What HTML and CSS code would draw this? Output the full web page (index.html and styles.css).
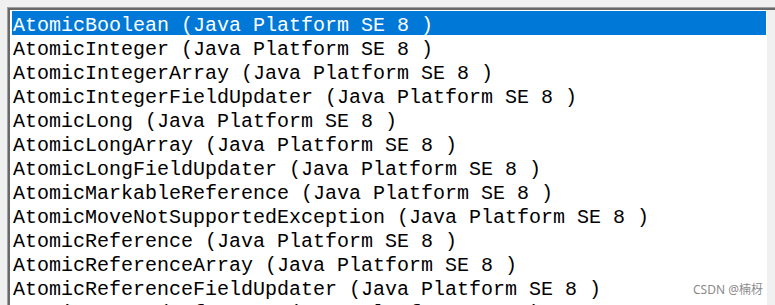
FILE: index.html
```html
<!DOCTYPE html>
<html>
<head>
<meta charset="utf-8">
<link rel="stylesheet" href="styles.css">
</head>
<body>
<div class="frame">
  <ul class="list">
    <li class="item selected">AtomicBoolean (Java Platform SE 8 )</li>
    <li class="item">AtomicInteger (Java Platform SE 8 )</li>
    <li class="item">AtomicIntegerArray (Java Platform SE 8 )</li>
    <li class="item">AtomicIntegerFieldUpdater (Java Platform SE 8 )</li>
    <li class="item">AtomicLong (Java Platform SE 8 )</li>
    <li class="item">AtomicLongArray (Java Platform SE 8 )</li>
    <li class="item">AtomicLongFieldUpdater (Java Platform SE 8 )</li>
    <li class="item">AtomicMarkableReference (Java Platform SE 8 )</li>
    <li class="item">AtomicMoveNotSupportedException (Java Platform SE 8 )</li>
    <li class="item">AtomicReference (Java Platform SE 8 )</li>
    <li class="item">AtomicReferenceArray (Java Platform SE 8 )</li>
    <li class="item">AtomicReferenceFieldUpdater (Java Platform SE 8 )</li>
    <li class="item">AtomicStampedReference (Java Platform SE 8 )</li>
  </ul>
  <div class="scrolltrack"></div>
</div>
<div class="watermark">CSDN @楠枒</div>
</body>
</html>
```

FILE: styles.css
```css
html, body {
  margin: 0;
  padding: 0;
  height: 305px;
  overflow: hidden;
  background: #f0f0f0;
}
body {
  position: relative;
  padding: 7px 0 0 7px;
  box-sizing: border-box;
}
.frame {
  display: flex;
  width: 800px;
  height: 320px;
  border-top: 1px solid #a0a0a0;
  border-left: 1px solid #a0a0a0;
}
.list {
  list-style: none;
  margin: 0;
  width: 759px;
  padding: 1px 1px 0 2px;
  box-sizing: border-box;
  background: #ffffff;
  border-top: 2px solid #696969;
  border-left: 2px solid #696969;
  flex: none;
}
.scrolltrack {
  flex: 1;
  background: #f0f0f0;
  border-top: 2px solid #696969;
}
.item {
  box-sizing: border-box;
  height: 24px;
  padding-top: 5px;
  line-height: 19px;
  padding-left: 1px;
  font-family: "Liberation Mono", monospace;
  font-size: 20px;
  color: #000000;
  white-space: nowrap;
}
.item.selected {
  background: #0078d7;
  color: #ffffff;
}
.watermark {
  position: absolute;
  right: 12px;
  bottom: 8px;
  font-family: "Noto Sans", "Noto Sans CJK SC", sans-serif;
  font-size: 12px;
  line-height: 14px;
  color: #8a8a8a;
}
```
